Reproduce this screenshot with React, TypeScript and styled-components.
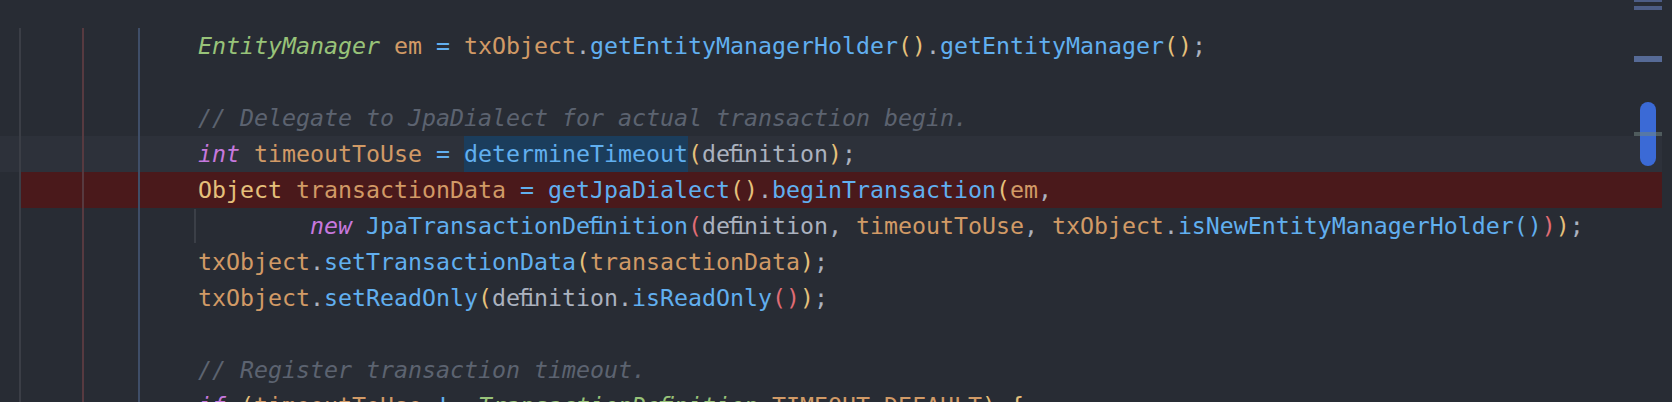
import React from 'react';
import styled, { createGlobalStyle, css } from 'styled-components';

const GlobalStyle = createGlobalStyle`
    html,
    body {
        margin: 0;
        padding: 0;
        background: #282c34;
    }
`;

type RowKind = 'plain' | 'current' | 'error';
type TokKind = 'txt' | 'kw' | 'iface' | 'cls' | 'var' | 'fn' | 'op' | 'p1' | 'p2' | 'p3' | 'cm' | 'const';

const TOKEN_COLORS: Record<TokKind, string> = {
    txt: '#abb2bf',
    kw: '#c678dd',
    iface: '#98c379',
    cls: '#e5c07b',
    var: '#d19a66',
    fn: '#61afef',
    op: '#61afef',
    p1: '#e5c07b',
    p2: '#e06c75',
    p3: '#61afef',
    cm: '#5c6370',
    const: '#d19a66',
};

const ITALIC: TokKind[] = ['kw', 'iface', 'cm'];

const EditorFrame = styled.div`
    position: relative;
    display: flex;
    width: 1672px;
    height: 402px;
    overflow: hidden;
    background: #282c34;
`;

const Lines = styled.div`
    display: flex;
    flex-direction: column;
    width: 1662px;
    padding-top: 28px;
    flex-shrink: 0;
`;

const RightEdge = styled.div`
    flex: 1;
    background: #282c34;
`;

const Row = styled.div<{ $kind: RowKind }>`
    display: flex;
    height: 36px;
    flex-shrink: 0;
    background: ${(p) => (p.$kind === 'current' ? '#2d313a' : 'transparent')};
`;

const GutterCell = styled.div`
    width: 19px;
    flex-shrink: 0;
    border-right: 2px solid #3b3e46;
`;

const Body = styled.div<{ $kind: RowKind }>`
    display: flex;
    flex: 1;
    background: ${(p) => (p.$kind === 'error' ? '#4a191b' : 'transparent')};
`;

const MarginCell = styled.div`
    width: 61px;
    flex-shrink: 0;
    border-right: 2px solid #573a40;
`;

const FoldCell = styled.div`
    width: 54px;
    flex-shrink: 0;
    border-right: 2px solid #3f4e68;
`;

const Code = styled.div`
    display: flex;
    align-items: center;
    flex: 1;
    padding-left: 54px;
    font-family: 'DejaVu Sans Mono', 'Liberation Mono', monospace;
    font-size: 23.25px;
    line-height: 36px;
    white-space: pre;
    color: #abb2bf;
`;

const IndentGuide = styled.span<{ $show: boolean }>`
    width: 2px;
    height: 34px;
    margin-right: 2px;
    flex-shrink: 0;
    background: ${(p) => (p.$show ? '#3b3f47' : 'transparent')};
`;

const LineText = styled.span`
    display: inline-block;
    height: 36px;
`;

const Tok = styled.span<{ $kind: TokKind; $sel?: boolean }>`
    color: ${(p) => TOKEN_COLORS[p.$kind]};
    font-style: ${(p) => (ITALIC.includes(p.$kind) ? 'italic' : 'normal')};
    ${(p) =>
        p.$sel &&
        css`
            display: inline-block;
            height: 36px;
            background: #1b3d5c;
        `}
`;

// one monospace cell holding both letters
const Lig = styled.span`
    display: inline-block;
    width: 1ch;
    letter-spacing: -0.5ch;
    text-indent: -0.25ch;
`;

const ScrollStripe = styled.div`
    position: absolute;
    top: 0;
    right: 10px;
    width: 28px;
    height: 100%;
`;

const StripeMark = styled.div<{ $top: number; $height: number; $color: string }>`
    position: absolute;
    left: 0;
    right: 0;
    top: ${(p) => p.$top}px;
    height: ${(p) => p.$height}px;
    background: ${(p) => p.$color};
`;

const Thumb = styled.div`
    position: absolute;
    left: 6px;
    top: 102px;
    width: 16px;
    height: 64px;
    border-radius: 8px;
    background: #3b6ad6;
`;

type Token = [TokKind, string, boolean?];

interface CodeLine {
    kind: RowKind;
    guide?: boolean;
    tokens: Token[];
}

const LINES: CodeLine[] = [
    {
        kind: 'plain',
        tokens: [
            ['iface', 'EntityManager'],
            ['txt', ' '],
            ['var', 'em'],
            ['txt', ' '],
            ['op', '='],
            ['txt', ' '],
            ['var', 'txObject'],
            ['txt', '.'],
            ['fn', 'getEntityManagerHolder'],
            ['p1', '()'],
            ['txt', '.'],
            ['fn', 'getEntityManager'],
            ['p1', '()'],
            ['txt', ';'],
        ],
    },
    { kind: 'plain', tokens: [] },
    { kind: 'plain', tokens: [['cm', '// Delegate to JpaDialect for actual transaction begin.']] },
    {
        kind: 'current',
        tokens: [
            ['kw', 'int'],
            ['txt', ' '],
            ['var', 'timeoutToUse'],
            ['txt', ' '],
            ['op', '='],
            ['txt', ' '],
            ['fn', 'determineTimeout', true],
            ['p1', '('],
            ['txt', 'definition'],
            ['p1', ')'],
            ['txt', ';'],
        ],
    },
    {
        kind: 'error',
        tokens: [
            ['cls', 'Object'],
            ['txt', ' '],
            ['var', 'transactionData'],
            ['txt', ' '],
            ['op', '='],
            ['txt', ' '],
            ['fn', 'getJpaDialect'],
            ['p1', '()'],
            ['txt', '.'],
            ['fn', 'beginTransaction'],
            ['p1', '('],
            ['var', 'em'],
            ['txt', ','],
        ],
    },
    {
        kind: 'plain',
        guide: true,
        tokens: [
            ['txt', '        '],
            ['kw', 'new'],
            ['txt', ' '],
            ['fn', 'JpaTransactionDefinition'],
            ['p2', '('],
            ['txt', 'definition, '],
            ['var', 'timeoutToUse'],
            ['txt', ', '],
            ['var', 'txObject'],
            ['txt', '.'],
            ['fn', 'isNewEntityManagerHolder'],
            ['p3', '()'],
            ['p2', ')'],
            ['p1', ')'],
            ['txt', ';'],
        ],
    },
    {
        kind: 'plain',
        tokens: [
            ['var', 'txObject'],
            ['txt', '.'],
            ['fn', 'setTransactionData'],
            ['p1', '('],
            ['var', 'transactionData'],
            ['p1', ')'],
            ['txt', ';'],
        ],
    },
    {
        kind: 'plain',
        tokens: [
            ['var', 'txObject'],
            ['txt', '.'],
            ['fn', 'setReadOnly'],
            ['p1', '('],
            ['txt', 'definition.'],
            ['fn', 'isReadOnly'],
            ['p2', '()'],
            ['p1', ')'],
            ['txt', ';'],
        ],
    },
    { kind: 'plain', tokens: [] },
    { kind: 'plain', tokens: [['cm', '// Register transaction timeout.']] },
    {
        kind: 'plain',
        tokens: [
            ['kw', 'if'],
            ['txt', ' '],
            ['p1', '('],
            ['var', 'timeoutToUse'],
            ['txt', ' '],
            ['op', '!='],
            ['txt', ' '],
            ['iface', 'TransactionDefinition'],
            ['txt', '.'],
            ['const', 'TIMEOUT_DEFAULT'],
            ['p1', ')'],
            ['txt', ' '],
            ['p1', '{'],
        ],
    },
];

// the editor font draws "fi" as one cell
function withLigatures(text: string): React.ReactNode[] {
    const parts = text.split('fi');
    const out: React.ReactNode[] = [];
    parts.forEach((part, i) => {
        if (i > 0) out.push(<Lig key={`l${i}`}>fi</Lig>);
        if (part) out.push(part);
    });
    return out;
}

const EditorLine: React.FC<{ line: CodeLine }> = ({ line }) => (
    <Row $kind={line.kind}>
        <GutterCell />
        <Body $kind={line.kind}>
            <MarginCell />
            <FoldCell />
            <Code>
                <IndentGuide $show={!!line.guide} />
                <LineText>
                    {line.tokens.map(([kind, text, sel], i) => (
                        <Tok key={i} $kind={kind} $sel={sel}>
                            {withLigatures(text)}
                        </Tok>
                    ))}
                </LineText>
            </Code>
        </Body>
    </Row>
);

export default function App() {
    return (
        <>
            <GlobalStyle />
            <EditorFrame>
                <Lines>
                    {LINES.map((line, i) => (
                        <EditorLine key={i} line={line} />
                    ))}
                </Lines>
                <RightEdge />
                <ScrollStripe>
                    <StripeMark $top={-2} $height={4} $color="#4d5d85" />
                    <StripeMark $top={6} $height={4} $color="#4d5d85" />
                    <StripeMark $top={56} $height={6} $color="#566a96" />
                    <Thumb />
                    <StripeMark $top={132} $height={4} $color="rgba(112, 132, 128, 0.55)" />
                </ScrollStripe>
            </EditorFrame>
        </>
    );
}
